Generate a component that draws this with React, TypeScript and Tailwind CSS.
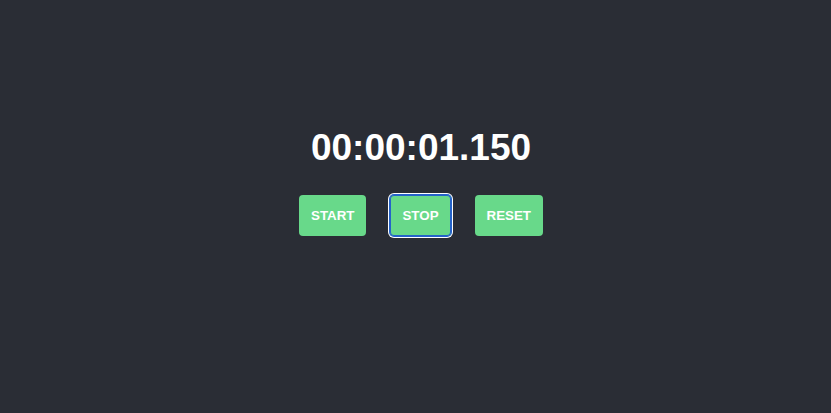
import React from 'react';

const buttons = ['START', 'STOP', 'RESET'];

const App: React.FC = () => {
  return (
    <div className="flex h-screen w-full flex-col items-center justify-center bg-[#2a2d35] pb-[50px] pl-[11px] font-['Liberation_Sans',Arial,sans-serif]">
      {/* Elapsed time */}
      <h1 className="text-[37px] font-bold leading-[42px] text-white">00:00:01.150</h1>

      {/* Controls */}
      <div className="mt-[26px] flex gap-6">
        {buttons.map((label) => (
          <button
            key={label}
            className={
              label === 'STOP'
                ? 'rounded px-3 py-3 text-[13.33px] font-bold leading-[17px] text-white bg-[#68d98a] shadow-[inset_0_0_0_1px_#2563c9,0_0_0_1px_#2563c9,0_0_0_2px_#ffffff]'
                : 'rounded px-3 py-3 text-[13.33px] font-bold leading-[17px] text-white bg-[#68d98a]'
            }
          >
            {label}
          </button>
        ))}
      </div>
    </div>
  );
};

export default App;
